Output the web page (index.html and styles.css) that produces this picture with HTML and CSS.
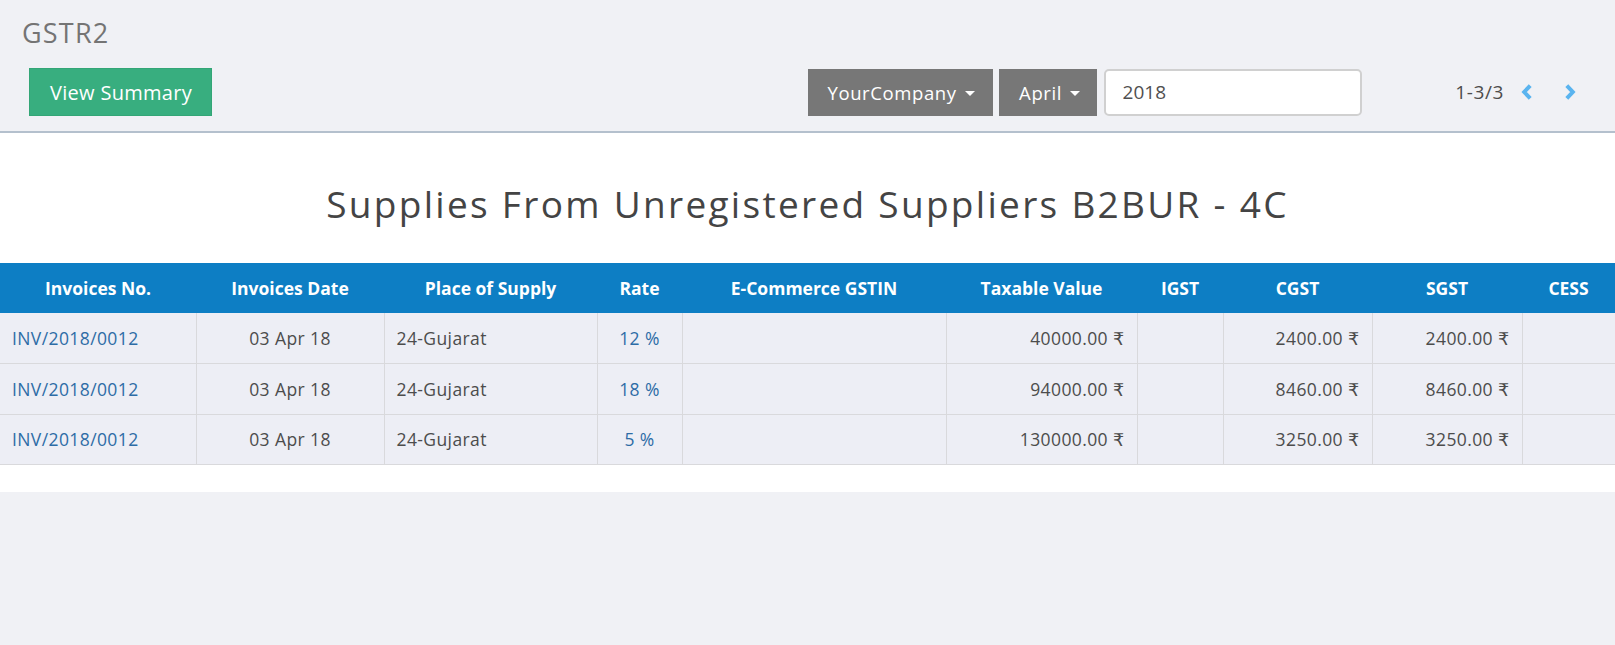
FILE: index.html
```html
<!DOCTYPE html>
<html lang="en">
<head>
<meta charset="utf-8">
<title>GSTR2</title>
<link rel="stylesheet" href="styles.css">
</head>
<body>
<div class="control-panel">
  <div class="breadcrumb">GSTR2</div>
  <div class="cp-row">
    <div class="cp-left">
      <button class="btn-summary" type="button">View Summary</button>
    </div>
    <div class="cp-right">
      <div class="filters">
        <button class="btn-select btn-company" type="button">YourCompany<span class="caret"></span></button>
        <button class="btn-select btn-month" type="button">April<span class="caret"></span></button>
        <input class="year-input" type="text" value="2018">
      </div>
      <div class="pager">
        <span class="pager-value">1-3/3</span>
        <button class="pager-btn pager-prev" type="button" aria-label="Previous">
          <svg width="12" height="16" viewBox="0 0 12 16"><polyline points="9.2,1.6 3.2,8 9.2,14.4" fill="none" stroke="#5ab4ef" stroke-width="4" stroke-linejoin="miter"/></svg>
        </button>
        <button class="pager-btn pager-next" type="button" aria-label="Next">
          <svg width="12" height="16" viewBox="0 0 12 16"><polyline points="2.8,1.6 8.8,8 2.8,14.4" fill="none" stroke="#5ab4ef" stroke-width="4" stroke-linejoin="miter"/></svg>
        </button>
      </div>
    </div>
  </div>
</div>
<div class="content">
  <h1 class="report-title">Supplies From Unregistered Suppliers B2BUR - 4C</h1>
  <table class="report-table">
    <colgroup>
      <col><col><col><col><col><col><col><col><col><col>
    </colgroup>
    <thead>
      <tr>
        <th>Invoices No.</th>
        <th>Invoices Date</th>
        <th>Place of Supply</th>
        <th>Rate</th>
        <th>E-Commerce GSTIN</th>
        <th>Taxable Value</th>
        <th>IGST</th>
        <th>CGST</th>
        <th>SGST</th>
        <th>CESS</th>
      </tr>
    </thead>
    <tbody>
      <tr>
        <td class="link">INV/2018/0012</td>
        <td class="center">03 Apr 18</td>
        <td>24-Gujarat</td>
        <td class="center link">12 %</td>
        <td></td>
        <td class="num">40000.00 ₹</td>
        <td></td>
        <td class="num">2400.00 ₹</td>
        <td class="num">2400.00 ₹</td>
        <td></td>
      </tr>
      <tr>
        <td class="link">INV/2018/0012</td>
        <td class="center">03 Apr 18</td>
        <td>24-Gujarat</td>
        <td class="center link">18 %</td>
        <td></td>
        <td class="num">94000.00 ₹</td>
        <td></td>
        <td class="num">8460.00 ₹</td>
        <td class="num">8460.00 ₹</td>
        <td></td>
      </tr>
      <tr>
        <td class="link">INV/2018/0012</td>
        <td class="center">03 Apr 18</td>
        <td>24-Gujarat</td>
        <td class="center link">5 %</td>
        <td></td>
        <td class="num">130000.00 ₹</td>
        <td></td>
        <td class="num">3250.00 ₹</td>
        <td class="num">3250.00 ₹</td>
        <td></td>
      </tr>
    </tbody>
  </table>
</div>
</body>
</html>
```

FILE: styles.css
```css
* {
  box-sizing: border-box;
}

html, body {
  margin: 0;
  padding: 0;
}

body {
  background: #f0f1f5;
  font-family: "Open Sans", "DejaVu Sans", sans-serif;
  color: #4c4c4c;
}

/* ---------- control panel ---------- */
.control-panel {
  background: #f0f1f5;
  border-bottom: 2px solid #b4c0cd;
  padding: 15px 16px 15px 16px;
}

.breadcrumb {
  padding-left: 6px;
  font-size: 27px;
  line-height: 36px;
  letter-spacing: 1.2px;
  color: #747474;
  margin-bottom: 17px;
}

.cp-row {
  display: grid;
  grid-template-columns: 1fr 1fr;
  align-items: center;
}

.cp-left {
  padding-left: 13px;
  display: flex;
  align-items: center;
}

.btn-summary {
  height: 48px;
  padding: 0 19px 0 20px;
  background: #38ae7f;
  border: 1px solid #33a676;
  color: #fff;
  font-family: inherit;
  font-size: 20px;
  letter-spacing: 0.3px;
  cursor: pointer;
}

.cp-right {
  display: flex;
  justify-content: space-between;
  align-items: center;
}

.filters {
  display: flex;
  align-items: center;
  gap: 6.5px;
}

.btn-select {
  height: 47px;
  display: flex;
  align-items: center;
  background: #777777;
  border: none;
  color: #fff;
  font-family: inherit;
  font-size: 18.5px;
  letter-spacing: 0.6px;
  cursor: pointer;
}

.btn-company {
  padding: 0 18px 0 20px;
}

.btn-month {
  padding: 0 16px 0 20px;
  min-width: 98px;
}

.caret {
  display: inline-block;
  width: 0;
  height: 0;
  margin-left: 8px;
  margin-top: 2px;
  border-left: 5.5px solid transparent;
  border-right: 5.5px solid transparent;
  border-top: 5.5px solid #ffffff;
}

.year-input {
  width: 258px;
  height: 47px;
  padding: 0 0 0 17px;
  border: 2px solid #d0d0d0;
  border-radius: 5px;
  background: #ffffff;
  font-family: inherit;
  font-size: 19px;
  color: #505050;
  outline: none;
}

.pager {
  display: flex;
  align-items: center;
  margin-right: 23px;
}

.pager-value {
  font-size: 19px;
  letter-spacing: 0.6px;
  color: #4c4c4c;
}

.pager-btn {
  display: flex;
  align-items: center;
  padding: 0;
  background: none;
  border: none;
  cursor: pointer;
}

.pager-prev {
  margin-left: 17px;
}

.pager-next {
  margin-left: 31px;
}

/* ---------- content ---------- */
.content {
  background: #ffffff;
  padding: 49px 0 27px 0;
}

.report-title {
  margin: 0 0 37px 0;
  font-size: 37px;
  line-height: 44px;
  font-weight: 400;
  letter-spacing: 2.3px;
  text-align: center;
  color: #444444;
}

.report-table {
  width: 100%;
  border-collapse: collapse;
  table-layout: fixed;
}

.report-table col:nth-child(1) { width: 196px; }
.report-table col:nth-child(2) { width: 188px; }
.report-table col:nth-child(3) { width: 213px; }
.report-table col:nth-child(4) { width: 85px; }
.report-table col:nth-child(5) { width: 264px; }
.report-table col:nth-child(6) { width: 191px; }
.report-table col:nth-child(7) { width: 86px; }
.report-table col:nth-child(8) { width: 149px; }
.report-table col:nth-child(9) { width: 150px; }
.report-table col:nth-child(10) { width: 93px; }

.report-table th {
  height: 50px;
  padding: 0 6px;
  background: #0d7ec4;
  color: #ffffff;
  font-size: 17.5px;
  font-weight: 700;
  text-align: center;
  white-space: nowrap;
}

.report-table td {
  height: 50.5px;
  padding: 0 12px;
  background: #edeef5;
  border: 1px solid #d9d9dc;
  font-size: 17.5px;
  letter-spacing: 0.4px;
  color: #4c4c4c;
  white-space: nowrap;
}

.report-table tbody tr:first-child td {
  border-top: none;
}

.report-table td:first-child {
  border-left: none;
}

.report-table td:last-child {
  border-right: none;
}

.report-table td.center {
  text-align: center;
}

.report-table td.num {
  text-align: right;
}

.report-table td.link {
  color: #2d6ca6;
}
```
